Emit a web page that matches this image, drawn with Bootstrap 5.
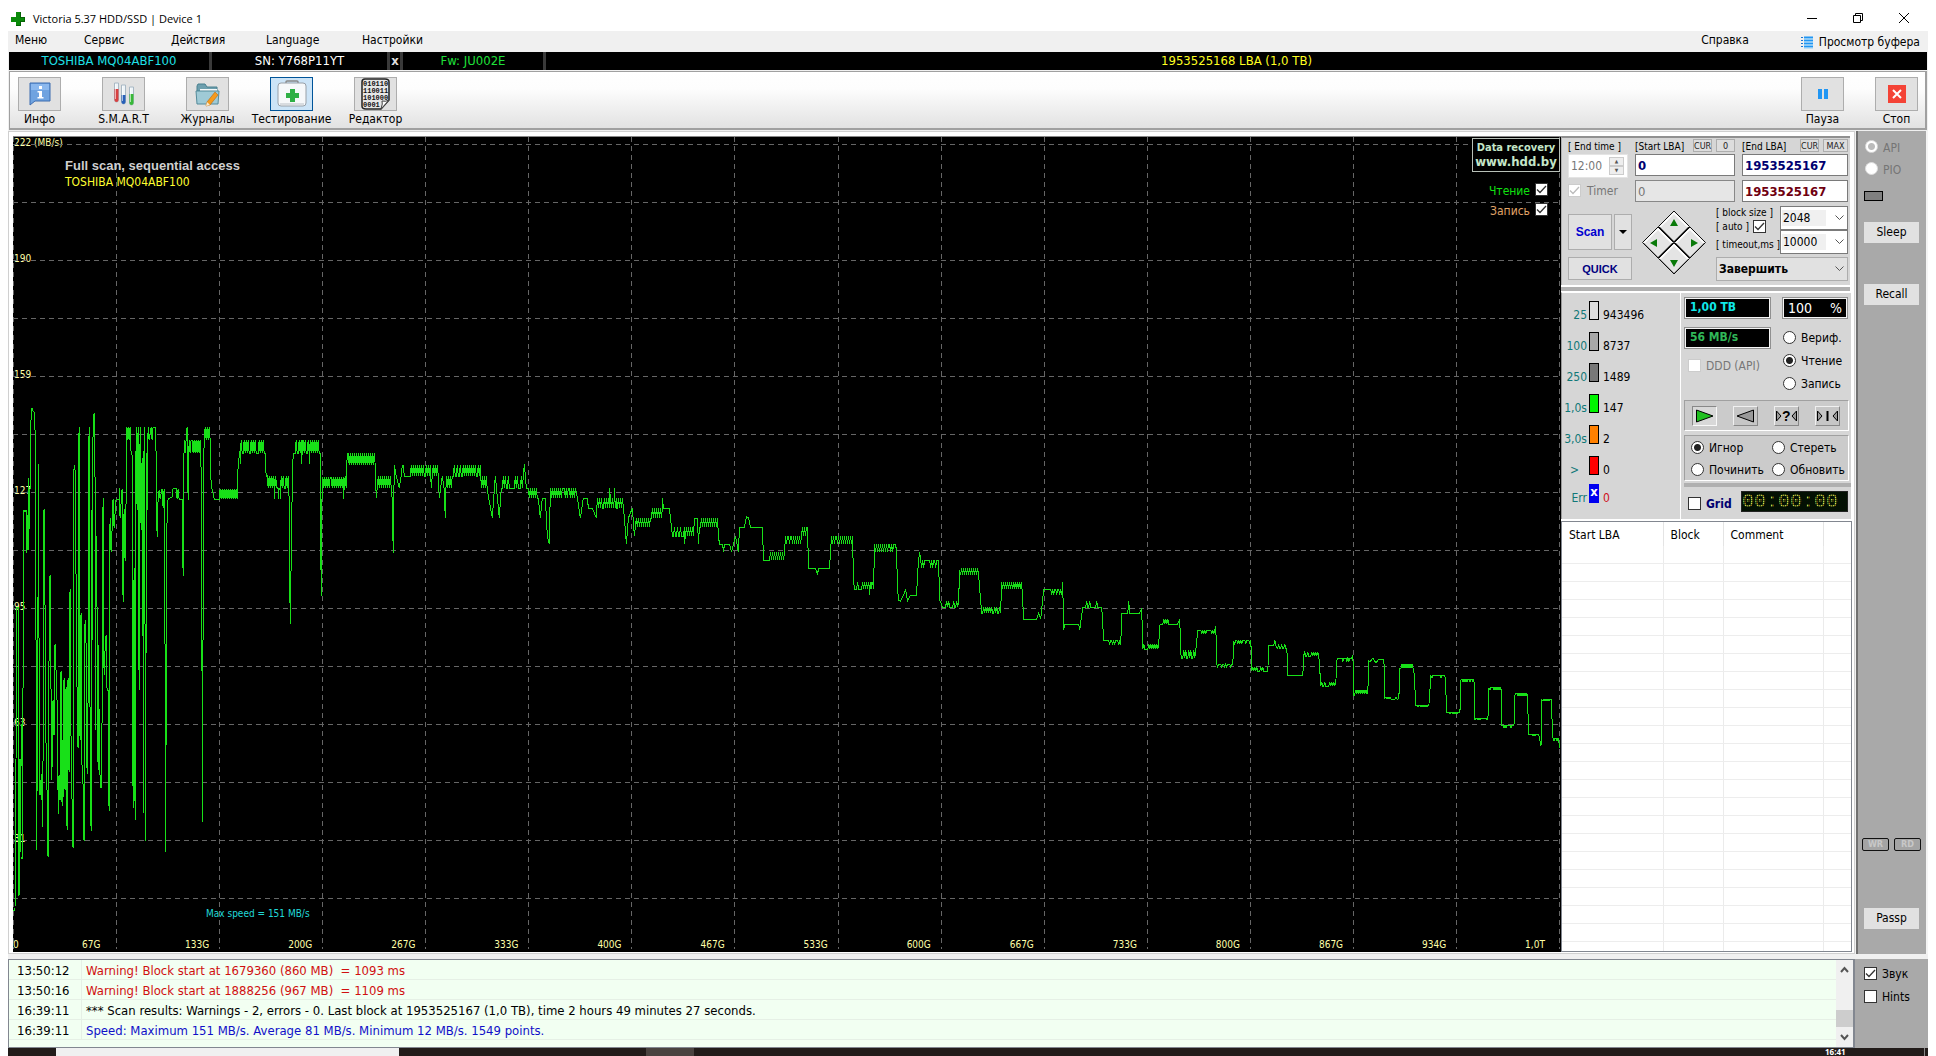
<!DOCTYPE html>
<html lang="ru">
<head>
<meta charset="utf-8">
<meta name="viewport" content="width=device-width, initial-scale=1">
<title>Victoria 5.37 HDD/SSD | Device 1</title>
<link href="https://cdn.jsdelivr.net/npm/bootstrap@5.3.0/dist/css/bootstrap.min.css" rel="stylesheet">
<style>
:root{--ui:"DejaVu Sans Condensed","DejaVu Sans",sans-serif}
body{font-family:var(--ui);font-size:12px;line-height:16px;color:#000;background:#fff;height:100vh;overflow:hidden}
button,input,select{font-family:inherit;font-size:inherit;line-height:inherit}
a{text-decoration:none;color:inherit}
.ttl{height:31px;flex:none;padding:11px 24px 0 11px;font:11px/16px "Open Sans",sans-serif}
.ttl button{border:0;background:none;padding:0;width:14px;height:14px;display:flex}
.app{margin:0 8px;background:#f0f0f0;min-height:0}
.mnu{height:21px;flex:none;padding:1px 8px 0 7px}
.mnu .m1{width:69px}.mnu .m2{width:87px}.mnu .m3{width:95px}.mnu .m4{width:96px}
.inf{height:18px;flex:none;margin:0 1px;background:#000;color:#fff;font-size:13px;line-height:17px}
.inf>div{text-align:center;border-right:3px solid #3a3a3a}
.inf>div:last-child{border:0}
.i1{width:203px;color:#1fe0e8}.i2{width:178px}.i3{width:13px;font-weight:bold;color:#ddd}.i4{width:143px;color:#1fe03a}.i5{color:#ffff20}
.tools{margin:1px 1px 0;height:59px;flex:none;border:1px solid #a0a0a0;border-right-width:2px;border-bottom-width:2px;background:linear-gradient(#fff,#fdfdfd 30%,#e2e2e2);padding:5px 7px 0 8px}
.tool{width:84px;border:0;background:none;padding:0;text-align:left;color:#000;display:block}
.tool .pic{width:43px;height:34px;background:#e1e1e1;border:1px solid #adadad;display:flex;align-items:center;justify-content:center}
.tool.act .pic{background:#cce4f7;border-color:#005499}
.tool .cap{display:block;width:83px;margin:0 -20px;text-align:center}
.tool.end{width:74px}.tool.end:last-child{width:43px}
.work{margin-top:1px;min-height:0}
.frame{background:#fff;border:1px solid #d0d0d0;padding:4px 2px 1px 4px;min-width:0}
.plot{background:#000;border-top:1px solid #888;position:relative;min-width:0;color:#ffffa8}
.plot svg{position:absolute;inset:0;width:100%;height:100%}
.ylab{position:absolute;inset:0 auto auto 1px;height:100%;font-size:10px;line-height:12px}
.ylab span{flex:0 0 auto;height:calc(100% / 7.025)}
.ylab span b{background:#000;font-weight:normal}
.xlab{position:absolute;left:0;right:0;bottom:1px;font-size:10px;line-height:12px}
.xlab span:first-child{flex:0 0 69px}.xlab span:last-child{flex:0 0 36px}
.note{position:absolute;left:52px;top:20px}
.note h1{font:bold 13px/18px "Liberation Sans",Arial,sans-serif;color:#cfcfcf;margin:0}
.note div{color:#ffff30;line-height:15px}
.peak{position:absolute;left:193px;bottom:30px;font-size:10px;color:#20d8d8;line-height:16px}
.ad{position:absolute;right:1px;top:1px;width:88px;height:34px;border:1px solid #b8c0b8;background:#000;color:#c4e6c8;font-weight:bold;text-align:center;font-size:11px;line-height:14px;padding-top:2px}
.ad big{font-size:13px;line-height:14px;display:block}
.swt{position:absolute;right:13px;top:46px;text-align:right}
.swt label{display:flex;justify-content:flex-end;gap:5px;height:20px;align-items:flex-start}
.tick{appearance:none;width:13px;height:13px;border:1px solid #333;background:#fff center/11px 11px no-repeat;margin:0;flex:none;border-radius:0}
.tick:checked{background-image:url("data:image/svg+xml,%3Csvg xmlns='http://www.w3.org/2000/svg' viewBox='0 0 11 11'%3E%3Cpath d='M1 5.5l3 3L10 2' fill='none' stroke='%23333' stroke-width='1.3'/%3E%3C/svg%3E")}
.tick:disabled{border-color:#ccc;opacity:1}
.tick:disabled:checked{background-image:url("data:image/svg+xml,%3Csvg xmlns='http://www.w3.org/2000/svg' viewBox='0 0 11 11'%3E%3Cpath d='M1 5.5l3 3L10 2' fill='none' stroke='%23bbb' stroke-width='1.3'/%3E%3C/svg%3E")}
.dot{appearance:none;width:13px;height:13px;border:1px solid #333;border-radius:50%;background:#fff;margin:0;flex:none}
.dot:checked{background:radial-gradient(circle,#222 0 3px,#fff 4px)}
.dot:disabled{border-color:#ddd}
.dot:disabled:checked{background:radial-gradient(circle,#bbb 0 3px,#fff 4px)}
.side{width:291px;flex:none}
.grp{background:#d6d6d6;border-top:2px solid #909090;border-left:1px solid #b0b0b0}
.top1{padding:1px 2px 4px 6px;margin-right:2px}
.c1{width:60px}.c2{width:100px}.c3{width:106px}
.hd{height:15px;font-size:10px;line-height:16px;white-space:nowrap;display:flex}
.mini{border:1px solid #adadad;background:#ddd;height:13px;line-height:10px;font-size:9px;padding:0;width:19px;color:#222}
.box{height:22px;width:100%;border:1px solid #7a7a7a;border-radius:0;background:#fff;padding:0 2px;display:block;font-size:13px;color:#000070}
.box:disabled{background:#e6e6e6;color:#777;border-color:#888;font-weight:normal}
.tm{width:60px;height:24px;background:#fff;padding:2px;border:1px solid #e4e4e4}
.tm input{border:0;background:none;width:38px;padding:0;color:#777}
.spin{width:15px;flex:none}
.spin button{height:9px;border:1px solid #ccc;background:#eee;padding:0;font-size:5px;line-height:7px;color:#555;display:block;width:15px}
.gb{border:1px solid #adadad;background:#e1e1e1;padding:0}
.sel{appearance:none;height:24px;border:1px solid #7a7a7a;border-radius:0;padding:0 2px;width:100%;background:linear-gradient(#f0f0f0,#f0f0f0) 1px 3px/44px 16px no-repeat,#fff;color:#000;display:block}
.selw{position:relative}
.selw svg{position:absolute;right:4px;top:9px;width:9px;height:6px;pointer-events:none}
.sel.big{background:#e1e1e1;border-color:#adadad;font-weight:bold;color:#000}
.bar4{height:4px;background:#b0b0b0;margin:2px 2px 1px 0}
.stat{width:119px;border-right:1px solid #fff;padding:8px 0 0 0;background:#d6d6d6}
.stat .ln{height:31px;display:flex;align-items:flex-start;gap:2px}
.stat .ln:nth-child(6){height:28px}
.stat .nm{width:25px;text-align:right;color:#107878;padding-top:6px;white-space:nowrap}
.stat .sw{width:10px;height:19px;border:1px solid #000;font:bold 13px/14px var(--ui);color:#fff;text-align:center;flex:none}
.stat .vl{padding:6px 0 0 2px}
.ctl{padding:4px 0 0 3px;background:#d6d6d6;width:170px}
.led{height:22px;border:1px solid #909090;outline:1px solid #f4f4f4;outline-offset:-2px;background:#000;padding:1px 5px;font-weight:bold;color:#10e8e8;width:87px}
.inset{border:1px solid #a0a0a0;border-right-color:#fff;border-bottom-color:#fff;background:#cbcbcb;width:165px}
.nav3{width:25px;height:20px;padding:0;border:1px solid #f0f0f0;border-right-color:#888;border-bottom-color:#888;background:#c6c6c6;display:flex;align-items:center;justify-content:center}
.nav3.on{border-color:#888 #f8f8f8 #f8f8f8 #888;background:#d8d8d8}
.lcd{width:107px;height:21px;background:#060c06;border:1px solid #222;color:#d8d848;font:20px/20px "Liberation Mono",monospace;position:relative}
.lcd::after{content:"";position:absolute;inset:0;background:repeating-linear-gradient(90deg,rgba(0,20,0,.6) 0 1px,transparent 1px 2px),repeating-linear-gradient(rgba(0,20,0,.6) 0 1px,transparent 1px 2px)}
.tabw{background:#fff;border:1px solid #828790;margin-top:2px;min-height:0;overflow:hidden}
.def{width:100%;table-layout:fixed;border-collapse:collapse;background:#fff}
.def th{font-weight:normal;height:24px;padding:3px 0 0 7px;border-right:1px solid #e4e4e4}
.def td{height:18px;border-right:1px solid #ebebeb;border-bottom:1px solid #ededed}
.def th:last-child,.def td:last-child{border-right:0}
.strip{width:72px;flex:none;background:#a9a9a9;border-left:2px solid #707070;border-right:2px solid #f4f4f4;padding:9px 0 25px 6px;margin-left:1px}
.strip label{display:flex;gap:5px;margin-left:1px;color:#757575}
.strip .gb{border-color:#e1e1e1;width:55px;height:21px;line-height:19px;display:block;flex:none}
.rw{border:1px solid #111;border-radius:2px;width:27px;height:13px;background:#a4a4a4;color:#c8c8c8;font:bold 9px/11px var(--ui);text-align:center}
.lamp{width:19px;height:10px;flex:none;border:1px solid #000;background:#808080;margin:11px 0 21px}
.logs{margin-top:5px;height:89px;flex:none}
.log{background:#f2fff2;border:1px solid #828790;border-right-width:2px;min-width:0;font-size:13px}
.log table{width:100%;align-self:flex-start;border-collapse:separate;border-spacing:0}
.log td{height:20px;padding:3px 0 0;line-height:16px;border-bottom:1px solid #e6f0e6;white-space:pre}
.log td:first-child{width:73px;padding-left:8px;border-right:1px solid #e6f0e6}
.log td:last-child{padding-left:4px}
.scrl{width:17px;background:#f0f0f0;flex:none}
.scrl i{display:block;height:17px;background:#cdcdcd;margin-top:auto}
.opt{width:73px;flex:none;background:#a9a9a9;padding:8px 0 0 9px}
.opt label{display:flex;gap:5px;height:23px;align-items:flex-start;line-height:14px}
.task{height:8px;flex:none;background:#221c1a;margin:0 8px;color:#fff;font:bold 8px/8px "Open Sans",sans-serif}
</style>
<script src="https://cdn.jsdelivr.net/npm/bootstrap@5.3.0/dist/js/bootstrap.bundle.min.js"></script>
</head>
<body class="d-flex flex-column">
<header class="ttl d-flex justify-content-between align-items-start">
  <div class="d-flex align-items-center gap-2">
    <svg width="14" height="16" viewBox="0 0 14 16"><path d="M5 1h5v5h4v5h-4v4H5v-4H0V6h5z" fill="#0a8a0a"/><path d="M9 1h1v5h4v5h-4v4H5v-1h4v-4h4V7H9z" fill="#046404"/></svg>
    <span class="text-nowrap">Victoria 5.37 HDD/SSD | Device 1</span>
  </div>
  <div class="d-flex" style="gap:32px">
    <button aria-label="Свернуть"><svg width="12" height="14"><path d="M1 7.500h10" stroke="#000"/></svg></button>
    <button aria-label="Восстановить"><svg width="12" height="14"><path d="M1.500 4.500h7v7h-7zM3.500 4V2.500h7v7H9" fill="none" stroke="#000"/></svg></button>
    <button aria-label="Закрыть"><svg width="12" height="14"><path d="M1 2l10 10M11 2L1 12" stroke="#000"/></svg></button>
  </div>
</header>

<div class="app flex-fill d-flex flex-column">
  <nav class="mnu d-flex">
    <a href="#" class="m1">Меню</a><a href="#" class="m2">Сервис</a><a href="#" class="m3">Действия</a><a href="#" class="m4">Language</a><a href="#">Настройки</a>
    <a href="#" class="ms-auto me-5">Справка</a>
    <a href="#" class="d-flex align-items-center ps-1" style="gap:6px"><svg width="12" height="13" viewBox="0 0 12 13"><path d="M0 1.500h2M0 4.500h2M0 7.500h2M0 10.500h2" stroke="#1976d2"/><path d="M3 1.500h9M3 4.500h9M3 7.500h9M3 10.500h9" stroke="#2196f3" stroke-width="2"/><path d="M3 3h9M3 6h9M3 9h9M3 12h9" stroke="#8fd0fa"/></svg>Просмотр буфера</a>
  </nav>
  <div class="inf d-flex">
    <div class="i1">TOSHIBA MQ04ABF100</div><div class="i2">SN: Y768P11YT</div><div class="i3">x</div><div class="i4">Fw: JU002E</div><div class="i5 flex-fill">1953525168 LBA (1,0 TB)</div>
  </div>
  <div class="tools d-flex align-items-start">
    <button class="tool"><span class="pic"><svg width="24" height="26" viewBox="0 0 24 26"><path d="M2 2h20v18H7l-5 4z" fill="#6fa3e0" stroke="#3c6cb0"/><path d="M3 3h18v6H3z" fill="#8bb8ee"/><path d="M11 5h3v3h-3zM9.500 10H14v6h1.500v1.500h-6V16H11v-4.500H9.500z" fill="#fff"/></svg></span><span class="cap">Инфо</span></button>
    <button class="tool"><span class="pic"><svg width="24" height="26" viewBox="0 0 24 26"><g fill="#eef4f8" stroke="#a8b8c4"><path d="M2.500 2h4v17a2 2 0 0 1-4 0zM9.500 4h4v17a2 2 0 0 1-4 0zM17.500 6h4v16a2 2 0 0 1-4 0z"/></g><path d="M2.500 8h4v11a2 2 0 0 1-4 0z" fill="#d84040"/><path d="M9.500 14h4v7a2 2 0 0 1-4 0z" fill="#2860b8"/><path d="M17.500 13h4v9a2 2 0 0 1-4 0z" fill="#38b838"/><path d="M3.500 3v15M10.500 5v15M18.500 7v14" stroke="#fff" stroke-opacity=".6"/></svg></span><span class="cap">S.M.A.R.T</span></button>
    <button class="tool"><span class="pic"><svg width="26" height="26" viewBox="0 0 26 26"><path d="M2 5l1-2h7l2 3h10v4H2z" fill="#6d9fae" stroke="#48808f"/><path d="M5 8h17v10H5z" fill="#f4f8f8"/><path d="M1 10h23l-1 13H2z" fill="#9fcad6" stroke="#548b9a"/><path d="M20 11l3 3-8 10-4 1 1-4z" fill="#f59a1c" stroke="#b86a10" stroke-width=".6"/><path d="M11 25l1-4 3 3z" fill="#f6ead0"/></svg></span><span class="cap">Журналы</span></button>
    <button class="tool act"><span class="pic"><svg width="32" height="28" viewBox="0 0 32 28"><path d="M10 4V2q0-1 1-1h10q1 0 1 1v2" fill="none" stroke="#888" stroke-width="1.500"/><rect x="2" y="3" width="28" height="23" rx="3" fill="#f6f8fa" stroke="#98a0a8"/><path d="M4 24h24" stroke="#d8dce0" stroke-width="2"/><path d="M14 9h5v4h4v5h-4v4h-5v-4h-4v-5h4z" fill="#2fb046"/></svg></span><span class="cap">Тестирование</span></button>
    <button class="tool"><span class="pic"><svg width="30" height="32" viewBox="0 0 30 32"><path d="M4 1h20q4 0 4 3v18l-8 9H5q-4 0-4-3V4q0-3 3-3z" fill="#e6e6e6" stroke="#222" stroke-width="1.500"/><path d="M20 31q2-6 1-8 4 1 7-1z" fill="#fff" stroke="#444"/><g font-family="Liberation Mono,monospace" font-weight="bold" font-size="7" fill="#111"><text x="2" y="8">010110</text><text x="2" y="15">110011</text><text x="2" y="22">101000</text><text x="2" y="29">0001</text></g></svg></span><span class="cap">Редактор</span></button>
    <button class="tool end ms-auto"><span class="pic"><svg width="12" height="12"><path d="M1 1h4v10H1zM7 1h4v10H7z" fill="#2196f3"/></svg></span><span class="cap">Пауза</span></button>
    <button class="tool end"><span class="pic"><svg width="18" height="18"><path d="M0 0h18v18H0z" fill="#f44336"/><path d="M5 5l8 8M13 5l-8 8" stroke="#fff" stroke-width="2"/></svg></span><span class="cap">Стоп</span></button>
  </div>

  <main class="work flex-fill d-flex">
    <div class="frame flex-fill d-flex">
      <section class="plot flex-fill">
        <div class="ylab d-flex flex-column"><span><b>222 (MB/s)</b></span><span>190</span><span>159</span><span>127</span><span>95</span><span>63</span><span>31</span></div>
        <div class="xlab d-flex" id="xlab"></div>
        <svg viewBox="13 137 1547 815" preserveAspectRatio="none" shape-rendering="crispEdges" aria-label="Скорость чтения">
          <g id="grid" stroke="#666" stroke-dasharray="5 4" fill="none"></g>
          <polyline id="curve" fill="none" stroke="#18e018" stroke-width="1"/>
        </svg>
        <div class="note"><h1>Full scan, sequential access</h1><div>TOSHIBA MQ04ABF100</div></div>
        <div class="peak">Max speed = 151 MB/s</div>
        <a class="ad" href="#">Data recovery<big>www.hdd.by</big></a>
        <div class="swt"><label style="color:#10e010">Чтение <input class="tick" type="checkbox" checked></label><label style="color:#e0a468">Запись <input class="tick" type="checkbox" checked></label></div>
      </section>

      <aside class="side d-flex flex-column">
        <div class="grp top1">
          <div class="d-flex justify-content-between">
            <div class="c1"><label class="hd" for="et">[ End time ]</label>
              <div class="tm d-flex"><input id="et" value="12:00" disabled><div class="spin"><button disabled>▲</button><button disabled>▼</button></div></div>
              <label class="d-flex" style="gap:6px;color:#777;padding-top:6px;line-height:14px"><input class="tick" type="checkbox" checked disabled>Timer</label></div>
            <div class="c2"><div class="hd justify-content-between"><label for="s1">[Start LBA]</label><span class="d-flex gap-1"><button class="mini">CUR</button><button class="mini">0</button></span></div>
              <input class="box fw-bold" id="s1" value="0"><input class="box mt-1" value="0" aria-label="Текущий LBA" disabled></div>
            <div class="c3"><div class="hd justify-content-between"><label for="e1">[End LBA]</label><span class="d-flex gap-1"><button class="mini">CUR</button><button class="mini" style="width:25px">MAX</button></span></div>
              <input class="box fw-bold" id="e1" value="1953525167"><input class="box fw-bold mt-1" style="color:#700010" value="1953525167" aria-label="Последний LBA"></div>
          </div>
          <div class="d-flex justify-content-between mt-1">
            <div style="width:64px;padding-top:8px">
              <div class="d-flex" style="gap:2px"><button class="gb fw-bold" style="width:44px;height:36px;color:#0000d0;font-family:'Liberation Sans',Arial,sans-serif">Scan</button><button class="gb" style="width:18px" aria-label="Режим"><svg width="8" height="5"><path d="M0 0h8L4 4z"/></svg></button></div>
              <button class="gb fw-bold w-100" style="margin-top:7px;height:23px;color:#000080;font-size:11px;font-family:'Liberation Sans',Arial,sans-serif">QUICK</button>
            </div>
            <svg width="68" height="68" viewBox="0 0 68 68" style="margin-top:3px" role="img" aria-label="Навигация">
              <g id="dm"><path d="M34 2l15.500 15.500L34 33 18.500 17.500z" fill="#e4e4e4" stroke="#111"/><path d="M20 18L34 4l14 14" fill="none" stroke="#fff" stroke-width="1.500"/><path d="M48 18L34 32 20 18" fill="none" stroke="#999"/></g>
              <use href="#dm" x="-16" y="16"/><use href="#dm" x="16" y="16"/><use href="#dm" y="32"/>
              <path d="M30 17h8l-4-7zM30 51h8l-4 7zM17 30v8l-7-4zM51 30v8l7-4z" fill="#0a7a0a"/>
            </svg>
            <div style="width:132px">
              <div class="d-flex">
                <div style="width:64px;font-size:10px;line-height:14px;white-space:nowrap">[ block size ]<br><label class="d-flex" style="gap:4px">[ auto ] <input class="tick" type="checkbox" checked></label><div class="pt-1">[ timeout,ms ]</div></div>
                <div style="width:68px"><div class="selw"><select class="sel" aria-label="block size"><option>2048</option></select><svg viewBox="0 0 9 6"><path d="M.5.5l4 4 4-4" fill="none" stroke="#555"/></svg></div><div class="selw"><select class="sel" aria-label="timeout"><option>10000</option></select><svg viewBox="0 0 9 6"><path d="M.5.5l4 4 4-4" fill="none" stroke="#555"/></svg></div></div>
              </div>
              <div class="selw" style="margin-top:3px"><select class="sel big" aria-label="По окончании"><option>Завершить</option></select><svg viewBox="0 0 9 6"><path d="M.5.5l4 4 4-4" fill="none" stroke="#555"/></svg></div>
            </div>
          </div>
        </div>
        <div class="bar4"></div>
        <div class="d-flex" style="height:227px;flex:none;margin-right:1px;border-left:1px solid #999;border-top:1px solid #fff">
          <div class="stat">
            <div class="ln"><span class="nm">25</span><span class="sw" style="background:#ddd"></span><span class="vl">943496</span></div>
            <div class="ln"><span class="nm">100</span><span class="sw" style="background:#a8a8a8"></span><span class="vl">8737</span></div>
            <div class="ln"><span class="nm">250</span><span class="sw" style="background:#787878"></span><span class="vl">1489</span></div>
            <div class="ln"><span class="nm">1,0s</span><span class="sw" style="background:#00f400"></span><span class="vl">147</span></div>
            <div class="ln"><span class="nm">3,0s</span><span class="sw" style="background:#ff8000"></span><span class="vl">2</span></div>
            <div class="ln"><span class="nm pe-2">&gt;</span><span class="sw" style="background:#f00"></span><span class="vl">0</span></div>
            <div class="ln"><span class="nm">Err</span><span class="sw" style="background:#0000f0;border-color:#0000f0">x</span><span class="vl" style="color:#d01020">0</span></div>
          </div>
          <div class="ctl">
            <div class="d-flex" style="gap:11px"><div class="led">1,00 TB</div><div class="led d-flex justify-content-between fw-normal" style="width:66px;color:#fff;font-size:14px;line-height:18px">100 <span>%</span></div></div>
            <div class="d-flex" style="gap:12px;margin-top:8px">
              <div style="width:87px"><div class="led" style="color:#30b858">56 MB/s</div><label class="d-flex" style="gap:5px;color:#777;margin:10px 0 0 4px;line-height:14px"><input class="tick" type="checkbox" disabled>DDD (API)</label></div>
              <div style="padding-top:4px;line-height:14px"><label class="d-flex" style="gap:5px;height:23px"><input class="dot" type="radio" name="op">Вериф.</label><label class="d-flex" style="gap:5px;height:23px"><input class="dot" type="radio" name="op" checked>Чтение</label><label class="d-flex" style="gap:5px;height:23px"><input class="dot" type="radio" name="op">Запись</label></div>
            </div>
            <div class="inset d-flex" style="height:31px;padding:5px 7px;gap:16px">
              <button class="nav3 on" aria-label="Вперёд"><svg width="19" height="14"><path d="M1.500 1v12L18 7z" fill="#20c020" stroke="#000"/></svg></button>
              <button class="nav3" aria-label="Назад"><svg width="19" height="14"><path d="M17.500 1v12L1 7z" fill="#999" stroke="#000"/></svg></button>
              <button class="nav3" aria-label="Случайно"><svg width="23" height="14"><path d="M1.500 2v10L6 7zM21.500 2v10L17 7z" fill="#999" stroke="#000"/><text x="7" y="12" font-size="14" font-weight="bold" font-family="Liberation Sans">?</text></svg></button>
              <button class="nav3" aria-label="Бабочка"><svg width="23" height="14"><path d="M1.500 2v10L6 7zM21.500 2v10L17 7z" fill="#999" stroke="#000"/><path d="M11.500 2v10" stroke="#000" stroke-width="2"/></svg></button>
            </div>
            <div class="inset" style="height:46px;margin-top:4px;padding:5px 0 0 6px;line-height:14px">
              <div class="d-flex" style="height:22px"><label class="d-flex" style="gap:5px;width:81px"><input class="dot" type="radio" name="er" checked>Игнор</label><label class="d-flex" style="gap:5px"><input class="dot" type="radio" name="er">Стереть</label></div>
              <div class="d-flex"><label class="d-flex" style="gap:5px;width:81px"><input class="dot" type="radio" name="er">Починить</label><label class="d-flex" style="gap:5px"><input class="dot" type="radio" name="er">Обновить</label></div>
            </div>
            <div class="bar4" style="margin:2px 0 4px"></div>
            <div class="d-flex"><label class="d-flex fw-bold" style="gap:5px;width:53px;color:#000070;padding:6px 0 0 4px;line-height:14px"><input class="tick" type="checkbox">Grid</label><div class="lcd" style="margin-left:4px">00:00:00</div></div>
          </div>
        </div>
        <div class="tabw flex-fill">
          <table class="def"><colgroup><col style="width:101px"><col style="width:60px"><col style="width:100px"><col></colgroup><thead><tr><th>Start LBA</th><th>Block</th><th>Comment</th><th></th></tr></thead><tbody id="rows"></tbody></table>
        </div>
      </aside>
    </div>
    <aside class="strip d-flex flex-column">
      <label style="height:22px"><input class="dot" type="radio" name="api" checked disabled>API</label>
      <label style="height:18px"><input class="dot" type="radio" name="api" disabled>PIO</label>
      <div class="lamp"></div>
      <button class="gb">Sleep</button>
      <button class="gb" style="margin-top:41px">Recall</button>
      <div class="d-flex mt-auto" style="gap:5px;margin-left:-2px;margin-bottom:57px"><span class="rw">WR</span><span class="rw">RD</span></div>
      <button class="gb">Passp</button>
    </aside>
  </main>

  <footer class="logs d-flex">
    <div class="log flex-fill d-flex">
      <table><tbody>
        <tr><td>13:50:12</td><td style="color:#d01010">Warning! Block start at 1679360 (860 MB)  = 1093 ms</td></tr>
        <tr><td>13:50:16</td><td style="color:#d01010">Warning! Block start at 1888256 (967 MB)  = 1109 ms</td></tr>
        <tr><td>16:39:11</td><td>*** Scan results: Warnings - 2, errors - 0. Last block at 1953525167 (1,0 TB), time 2 hours 49 minutes 27 seconds.</td></tr>
        <tr><td>16:39:11</td><td style="color:#1010c8">Speed: Maximum 151 MB/s. Average 81 MB/s. Minimum 12 MB/s. 1549 points.</td></tr>
      </tbody></table>
      <div class="scrl d-flex flex-column justify-content-between align-items-center py-1"><svg width="9" height="12"><path d="M1 8l3.500-4L8 8" fill="none" stroke="#555" stroke-width="2"/></svg><i class="w-100 mb-1"></i><svg width="9" height="12"><path d="M1 4l3.500 4L8 4" fill="none" stroke="#555" stroke-width="2"/></svg></div>
    </div>
    <div class="opt"><label><input class="tick" type="checkbox" checked>Звук</label><label><input class="tick" type="checkbox">Hints</label></div>
  </footer>
</div>
<div class="task d-flex"><span style="width:48px"></span><span style="width:343px;background:#f0f0f0"></span><span style="width:247px"></span><span style="width:48px;background:#4a4340"></span><span class="ms-auto" style="width:99px">16:41</span><span style="width:4px;border-left:1px solid #888"></span></div>

<script>
// Each entry is x,y for a point or x0:x1:level:alt:p for a noisy plateau.
const P="13,910 15,910 16,760 17,607 18,607 19,896 20,759 20,852 21,766 22,724 22,859 23,690 24,510 25,512 26,510 26,553 27,515 28,550 28,478 29,529 30,490 31,420 32,408 33,411 34,412 35,430 36,640 36,850 37,790 38,596 38,464 39,640 39,790 40,795 41,780 41,800 42,774 42,827 43,760 44,509 45,606 46,745 47,790 48,857 49,660 50,575 51,690 51,780 52,767 53,700 54,735 55,644 56,670 57,700 57,740 58,790 58,814 59,775 60,800 61,671 62,806 62,740 63,797 64,678 64,760 65,790 66,687 67,830 67,755 68,678 69,772 70,589 71,740 72,800 73,848 73,660 74,465 75,470 76,577 77,690 78,748 79,427 79,590 80,740 81,613 82,770 83,784 84,841 85,620 86,644 87,774 88,700 89,427 90,720 91,831 91,510 92,640 93,430 94,413 95,480 95,730 96,536 97,610 98,770 98,645 100,778 101,788 102,720 103,498 104,675 105,650 106,635 107,690 108,690 109,811 109,690 110,518 111,552 112,530 113,499 114,528 116,499 119,499 119,488 120,518 122,489 123,602 124,509 125,561 126,500 126,427 127,440 128,427 129,440 130,427 131,453 132,455 133,808 134,568 135,820 136,427 137,510 138,427 139,690 140,427 141,530 142,458 143,650 143,813 144,427 145,640 145,841 146,640 147,440 147,510 148,427 149,440 151,427 152,440 153,427 155,427 156,453 157,537 158,499 159,490 160,499 162,489 163,508 164,489 165,660 165,852 166,735 167,505 168,499 172,497 173,488 176,488 177,499 178,489 179,499 182,499 183,576 184,440 185,453 186,440 187,427 188,500 189,440 190:200:440:453:5 201,470 202,695 202,822 203,620 204,430 204:210:427:440:5 211,485 213,493 214,499 218,499 219:236:489:499:6 237,499 238,464 240,450 240,464 241:264:453:440:5 265,453 266,477 267:288:488:476:3 274,499 276,480 278,499 280,499 281,476 289,500 290,624 291,560 292,490 293,453 295,453 296:319:453:440:4 301,464 302,440 309,464 320,453 321,596 322,477 323:344:477:488:5 343,499 345,476 346,488 347,453 348:374:465:453:6 375,465 376,498 377:391:476:488:6 392,500 393,553 394,465 396,476 399,488 401,476 402,465 403:430:476:465:4 431,488 432:438:465:476:6 439,498 442,476 444,490 445,518 446,476 447:452:476:488:6 453:480:476:465:4 481:486:476:488:6 487,490 492,518 495,476 499,518 501,488 502:523:488:476:4 524,464 526,488 528,488 529:537:488:498:6 538,498 540,518 542,498 545,498 547,536 549,544 550,488 551:574:488:498:5 575,488 577,498 580,518 583,498 587,498 588,508 592,508 596,518 597:623:508:498:5 609,488 611,508 614,488 616,508 624,518 626,544 628,518 632,508 634,536 636,518 637:650:518:527:5 651:663:508:518:5 662,498 664,508 669,508 670,518 672,536 673:693:536:527:4 684,544 686,527 694,518 697,518 698,544 699,527 700:717:518:527:6 718,536 719,544 722,544 723,552 724,544 729,544 731,552 733,544 735,536 738,552 739,527 744,527 746,517 748,518 750,527 762,527 763,560 769,560 770:784:552:560:5 785,536 786:800:536:544:5 801:806:527:536:5 807,527 808,568 815,568 817,575 818,568 829,568 830,552 831,536 832:852:536:544:5 853,582 854:873:589:582:4 869,595 871,582 874,544 875:896:544:552:5 897,590 898,600 900,601 903,595 905,589 907,601 910,595 916,595 917,575 918,560 919,552 920,560 921:937:560:568:3 938,560 939,600 942,607 943:958:607:601:3 959,570 960:978:568:575:6 981,613 982:1000:613:607:4 1001,582 1002:1021:582:589:5 1023,619 1036,619 1038,613 1040,619 1042,600 1043,589 1044:1061:589:595:3 1062,582 1063,630 1064,624 1078,624 1079,630 1082,608 1083:1101:607:601:2 1103,640 1104:1120:640:645:2 1121,613 1127,613 1128,601 1129,613 1139,613 1141,608 1142,649 1143:1158:649:644:4 1159,625 1160:1177:624:619:1 1179,619 1180,654 1181:1195:658:650:4 1197,630 1198:1214:630:634:1 1215,626 1216,664 1217:1232:664:667:3 1233,641 1234:1250:640:644:3 1251,671 1252:1267:671:667:4 1268,645 1273,645 1274,640 1275,646 1276:1286:648:645:2 1287,675 1302,675 1303,655 1304:1318:656:652:4 1320,686 1321:1335:686:682:4 1336,660 1337:1351:658:661:2 1352,655 1353,696 1354:1367:694:690:4 1368,661 1369,662 1372,658 1375,663 1378,659 1383,659 1384,698 1385:1398:699:697:2 1399,668 1400:1412:664:668:4 1413,671 1415,705 1416:1428:705:707:2 1430,676 1431:1444:675:678:2 1446,712 1447:1459:712:714:3 1460,680 1461:1473:679:682:4 1474,720 1475:1487:718:720:2 1488,688 1489:1500:687:690:4 1501,725 1502:1513:725:728:3 1514,695 1515:1526:693:696:3 1528,734 1529:1538:734:736:2 1540,746 1541,700 1542:1550:699:701:3 1552,738 1553:1557:738:741:3 1559,748";
let seed=7;const rnd=()=>{seed=(seed*16807)%2147483647;return seed/2147483647};
const out=[];
for(const t of P.split(" ")){
  // A plateau is a row of short teeth: it leaves its level for one sample and comes back.
  if(t.includes(":")){const[a,b,l,h,p]=t.split(":").map(Number);let up=false;for(let x=a;x<=b;x++){up=!up&&rnd()*10<p*1.8;out.push([x,up?h:l]);}}
  else out.push(t.split(",").map(Number));
}
out.sort((a,b)=>a[0]-b[0]);
curve.setAttribute("points",out.join(" "));
let g="";
for(let i=0;i<16;i++)g+=`<path d="M${13.5+i*103} 137V949"/>`;
for(let i=0;i<14;i++)g+=`<path d="M13 ${144.5+i*58}H1559"/>`;
grid.innerHTML=g;
xlab.innerHTML=["0","67G","133G","200G","267G","333G","400G","467G","533G","600G","667G","733G","800G","867G","934G","1,0T"].map((s,i)=>`<span class="${i&&i<15?'flex-fill':''}" style="${i&&i<15?'width:0':''}">${s}</span>`).join("");
rows.innerHTML="<tr><td></td><td></td><td></td><td></td></tr>".repeat(23);
</script>
</body>
</html>
